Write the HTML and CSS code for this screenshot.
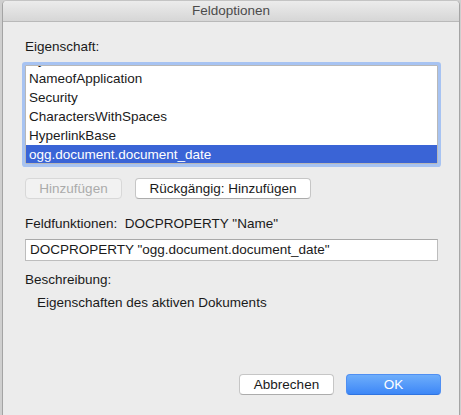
FILE: index.html
```html
<!DOCTYPE html>
<html lang="de">
<head>
<meta charset="utf-8">
<title>Feldoptionen</title>
<link rel="stylesheet" href="styles.css">
</head>
<body>
<div class="window">
  <div class="titlebar">Feldoptionen</div>
  <div class="content">
    <div class="label first">Eigenschaft:</div>
    <div class="listbox">
      <div class="list-inner">
        <div class="row">Bytes</div>
        <div class="row">NameofApplication</div>
        <div class="row">Security</div>
        <div class="row">CharactersWithSpaces</div>
        <div class="row">HyperlinkBase</div>
        <div class="row selected">ogg.document.document_date</div>
      </div>
    </div>
    <div class="btn-row">
      <div class="btn disabled w-add">Hinzufügen</div>
      <div class="btn w-undo">Rückgängig: Hinzufügen</div>
    </div>
    <div class="label fn">Feldfunktionen:&nbsp;&nbsp;DOCPROPERTY "Name"</div>
    <div class="field">DOCPROPERTY "ogg.document.document_date"</div>
    <div class="label desc">Beschreibung:</div>
    <div class="label desc-text">Eigenschaften des aktiven Dokuments</div>
    <div class="footer">
      <div class="btn w-foot">Abbrechen</div>
      <div class="btn primary w-foot">OK</div>
    </div>
  </div>
</div>
</body>
</html>
```
FILE: styles.css
```css
html, body {
  margin: 0;
  padding: 0;
}
body {
  width: 461px;
  height: 415px;
  overflow: hidden;
  background: #cfcfcf;
  font-family: "Liberation Sans", Arial, sans-serif;
  font-size: 13.5px;
  color: #1a1a1a;
}
.window {
  margin-left: 2px;
  width: 456px;
  height: 430px;
  background: #ececec;
  border-left: 1px solid #a4a4a4;
  border-right: 1px solid #a4a4a4;
  border-top: 1px solid #c4c4c4;
  border-radius: 5px 5px 0 0;
  overflow: hidden;
}
.titlebar {
  height: 20px;
  line-height: 20px;
  text-align: center;
  color: #4b4b4b;
  background: linear-gradient(#ececec, #d6d6d6);
  border-bottom: 1px solid #b9b9b9;
}
.content {
  padding: 0 21px 0 22px;
  display: flex;
  flex-direction: column;
}
.label {
  line-height: 16px;
  height: 16px;
  white-space: nowrap;
}
.first {
  margin-top: 17px;
}
.listbox {
  margin-top: 10px;
  height: 97px;
  border: 1px solid #b8b8b8;
  background: #fff;
  box-shadow: 0 0 0 3px #a7c3f2;
  border-radius: 1px;
  overflow: hidden;
}
.list-inner {
  margin-top: -16px;
}
.row {
  height: 19px;
  line-height: 19px;
  padding-left: 3px;
  white-space: nowrap;
}
.row.selected {
  background: #3a64d6;
  color: #fff;
}
.btn-row {
  display: flex;
  gap: 13px;
  margin-top: 14px;
}
.btn {
  box-sizing: border-box;
  height: 21px;
  line-height: 19px;
  text-align: center;
  background: #fff;
  border: 1px solid #c6c6c6;
  border-bottom-color: #acacac;
  border-radius: 4px;
  white-space: nowrap;
  color: #1a1a1a;
}
.btn.disabled {
  background: #f2f2f2;
  border-color: #d8d8d8;
  color: #ababab;
}
.w-add {
  width: 97px;
}
.w-undo {
  width: 176px;
}
.fn {
  margin-top: 17px;
}
.field {
  box-sizing: border-box;
  margin-top: 7px;
  height: 22px;
  line-height: 20px;
  padding-left: 4px;
  background: #fff;
  border: 1px solid #bdbdbd;
  border-top-color: #a9a9a9;
  white-space: nowrap;
}
.desc {
  margin-top: 11px;
}
.desc-text {
  margin-top: 7px;
  padding-left: 12px;
}
.footer {
  display: flex;
  justify-content: flex-end;
  gap: 12px;
  margin-top: 63px;
  margin-right: -3px;
}
.w-foot {
  width: 95px;
}
.btn.primary {
  background: linear-gradient(#6eaefb, #3d87f7);
  border-color: #4f8ff2;
  border-bottom-color: #2f74e0;
  color: #fff;
}
```
